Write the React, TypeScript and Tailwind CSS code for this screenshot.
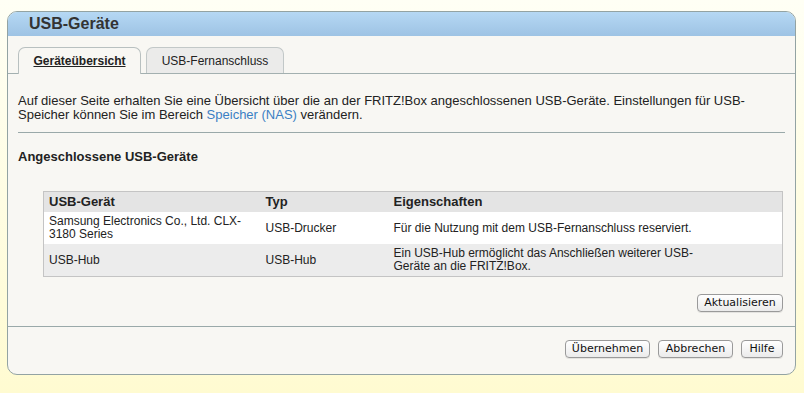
import React from 'react'

type Row = { geraet: string; typ: string; eigenschaften: string }

const rows: Row[] = [
  { geraet: 'Samsung Electronics Co., Ltd. CLX-3180 Series', typ: 'USB-Drucker', eigenschaften: 'Für die Nutzung mit dem USB-Fernanschluss reserviert.' },
  { geraet: 'USB-Hub', typ: 'USB-Hub', eigenschaften: 'Ein USB-Hub ermöglicht das Anschließen weiterer USB-Geräte an die FRITZ!Box.' },
]

function Btn({ children, w }: { children: React.ReactNode; w: string }) {
  return (
    <button
      className={`${w} h-[18px] rounded-[4px] border border-[#9a9a9a] bg-gradient-to-b from-white to-[#ebebeb] text-[11px] leading-[16px] text-[#111] shadow-[0_1px_0_rgba(0,0,0,0.08)] [font-family:'DejaVu_Sans',sans-serif]`}
    >
      {children}
    </button>
  )
}

export default function App() {
  return (
    <div className="w-[804px] h-[393px] overflow-hidden bg-gradient-to-b from-[#fffff5] to-[#fffbd1] pt-[11px] pl-[7px] [font-family:'Liberation_Sans',Arial,sans-serif] text-[#222]">
      <div className="w-[789px] rounded-[10px] border border-[#93a3a3] bg-[#f8f7f3] overflow-hidden">
        <div className="h-[24px] bg-gradient-to-b from-[#b5d8f4] to-[#9ec3e4] pl-[21px] flex items-center">
          <h1 className="text-[16px] font-bold text-[#333]">USB-Geräte</h1>
        </div>

        <div className="mt-[11px] pl-[10px] flex items-end gap-[5px] border-b border-[#a3b0b0] h-[27px]">
          <div className="relative -mb-px w-[123px] h-[27px] rounded-t-[7px] border border-b-0 border-[#b8c0c0] bg-[#f8f7f3] flex items-center justify-center">
            <span className="text-[12px] font-bold underline text-[#222]">Geräteübersicht</span>
          </div>
          <div className="w-[138px] h-[26px] rounded-t-[7px] border border-b-0 border-[#c2c8c8] bg-[#ebebea] flex items-center justify-center">
            <span className="text-[12px] text-[#222]">USB-Fernanschluss</span>
          </div>
        </div>

        <div className="px-[10px]">
          <p className="mt-[20px] text-[13px] leading-[14px] text-[#222]">
            Auf dieser Seite erhalten Sie eine Übersicht über die an der FRITZ!Box angeschlossenen USB-Geräte. Einstellungen für USB-Speicher können Sie im Bereich <a className="text-[#3b7fc4]">Speicher (NAS)</a> verändern.
          </p>
          <div className="mt-[10px] h-px bg-[#9aa9a9]" />
          <h2 className="mt-[16px] text-[13px] leading-[15px] font-bold text-[#222]">Angeschlossene USB-Geräte</h2>

          <table className="mt-[27px] ml-[25px] w-[740px] border-collapse border border-[#c4c4c4] text-[12px] leading-[13px] text-[#222]">
            <thead>
              <tr className="bg-[#e4e4e4]">
                <th className="w-[217px] text-left font-bold text-[13px] px-[5px] py-[3px] leading-[14px]">USB-Gerät</th>
                <th className="w-[128px] text-left font-bold text-[13px] px-[5px] py-[3px] leading-[14px]">Typ</th>
                <th className="w-[325px] text-left font-bold text-[13px] px-[5px] py-[3px] leading-[14px]">Eigenschaften</th>
                <th />
              </tr>
            </thead>
            <tbody>
              {rows.map((r, i) => (
                <tr key={i} className={i % 2 === 0 ? 'bg-white' : 'bg-[#ececec]'}>
                  <td className="px-[5px] py-[3px] align-middle">{r.geraet}</td>
                  <td className="px-[5px] py-[3px] align-middle">{r.typ}</td>
                  <td className="px-[5px] py-[3px] align-middle">{r.eigenschaften}</td>
                  <td />
                </tr>
              ))}
            </tbody>
          </table>

          <div className="mt-[17px] flex justify-end pr-[2px]">
            <Btn w="w-[86px]">Aktualisieren</Btn>
          </div>
        </div>

        <div className="mt-[14px] h-px bg-[#9aa9a9]" />
        <div className="mt-[13px] mb-[16px] pr-[12px] flex justify-end gap-[8px]">
          <Btn w="w-[85px]">Übernehmen</Btn>
          <Btn w="w-[75px]">Abbrechen</Btn>
          <Btn w="w-[42px]">Hilfe</Btn>
        </div>
      </div>
    </div>
  )
}
